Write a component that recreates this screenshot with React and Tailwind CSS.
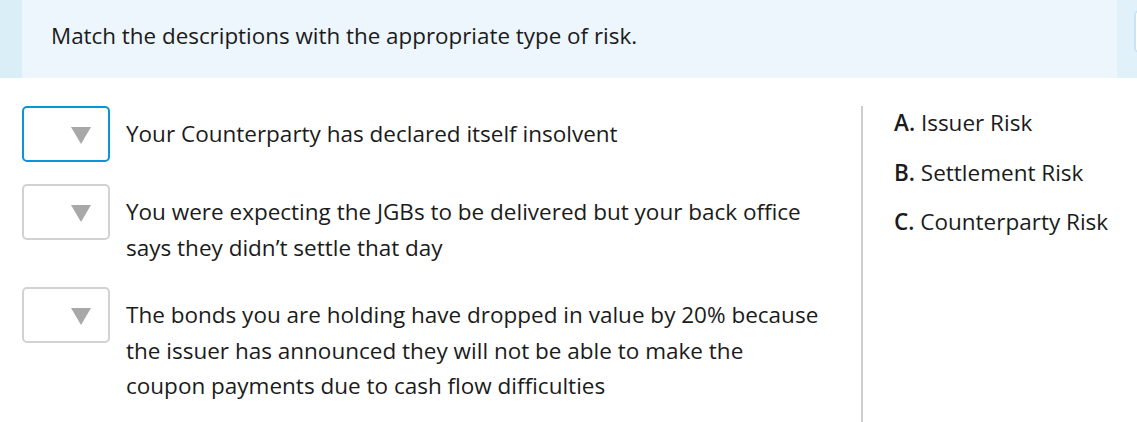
import React from "react";

const font = { fontFamily: '"Open Sans", "Noto Sans", sans-serif' };

function Select({ active }) {
  return (
    <div
      className={`w-[88px] h-[56px] shrink-0 rounded-[5px] border-2 bg-white flex items-center justify-end pr-[17px] ${
        active ? "border-[#0a96d4]" : "border-[#d2d2d2]"
      }`}
    >
      <svg width="20" height="17" viewBox="0 0 20 17" className="mt-[2px]">
        <polygon points="0,0 20,0 10,17" fill="#a8a8a8" />
      </svg>
    </div>
  );
}

function Row({ active, lines }) {
  return (
    <div className="flex items-start">
      <Select active={active} />
      <div className="ml-[16px] pt-[10px] text-[22.5px] leading-[35.5px] text-[#1b1b1b] whitespace-nowrap">
        {lines.map((l, i) => (
          <div key={i}>{l}</div>
        ))}
      </div>
    </div>
  );
}

export default function App() {
  return (
    <div className="w-[1137px] h-[422px] bg-white overflow-hidden" style={font}>
      <div className="flex h-[78px]">
        <div className="w-[22px] bg-[#daeef8]" />
        <div className="flex-1 bg-[#edf6fc] flex items-center pl-[29px] pb-[6px]">
          <span className="text-[22.4px] text-[#1b1b1b]">
            Match the descriptions with the appropriate type of risk.
          </span>
        </div>
        <div className="w-[20px] bg-[#e0f1fa] flex pt-[10px] pl-[17px]">
          <div className="w-[20px] h-[43px] shrink-0 bg-white border-2 border-[#c9e5f4] rounded-[5px]" />
        </div>
      </div>
      <div className="flex pt-[28px] pl-[22px]">
        <div className="w-[839px] flex flex-col gap-[22px]">
          <Row active lines={["Your Counterparty has declared itself insolvent"]} />
          <Row
            lines={[
              "You were expecting the JGBs to be delivered but your back office",
              "says they didn\u2019t settle that day",
            ]}
          />
          <Row
            lines={[
              "The bonds you are holding have dropped in value by 20% because",
              "the issuer has announced they will not be able to make the",
              "coupon payments due to cash flow difficulties",
            ]}
          />
        </div>
        <div className="w-[2px] bg-[#cfcfcf] h-[330px]" />
        <div className="pl-[31px] pt-[3px] flex flex-col gap-[21px] text-[22.5px] leading-[28.5px] text-[#1b1b1b] whitespace-nowrap">
          <div>
            <span className="font-semibold">A.</span> Issuer Risk
          </div>
          <div>
            <span className="font-semibold">B.</span> Settlement Risk
          </div>
          <div>
            <span className="font-semibold">C.</span> Counterparty Risk
          </div>
        </div>
      </div>
    </div>
  );
}
